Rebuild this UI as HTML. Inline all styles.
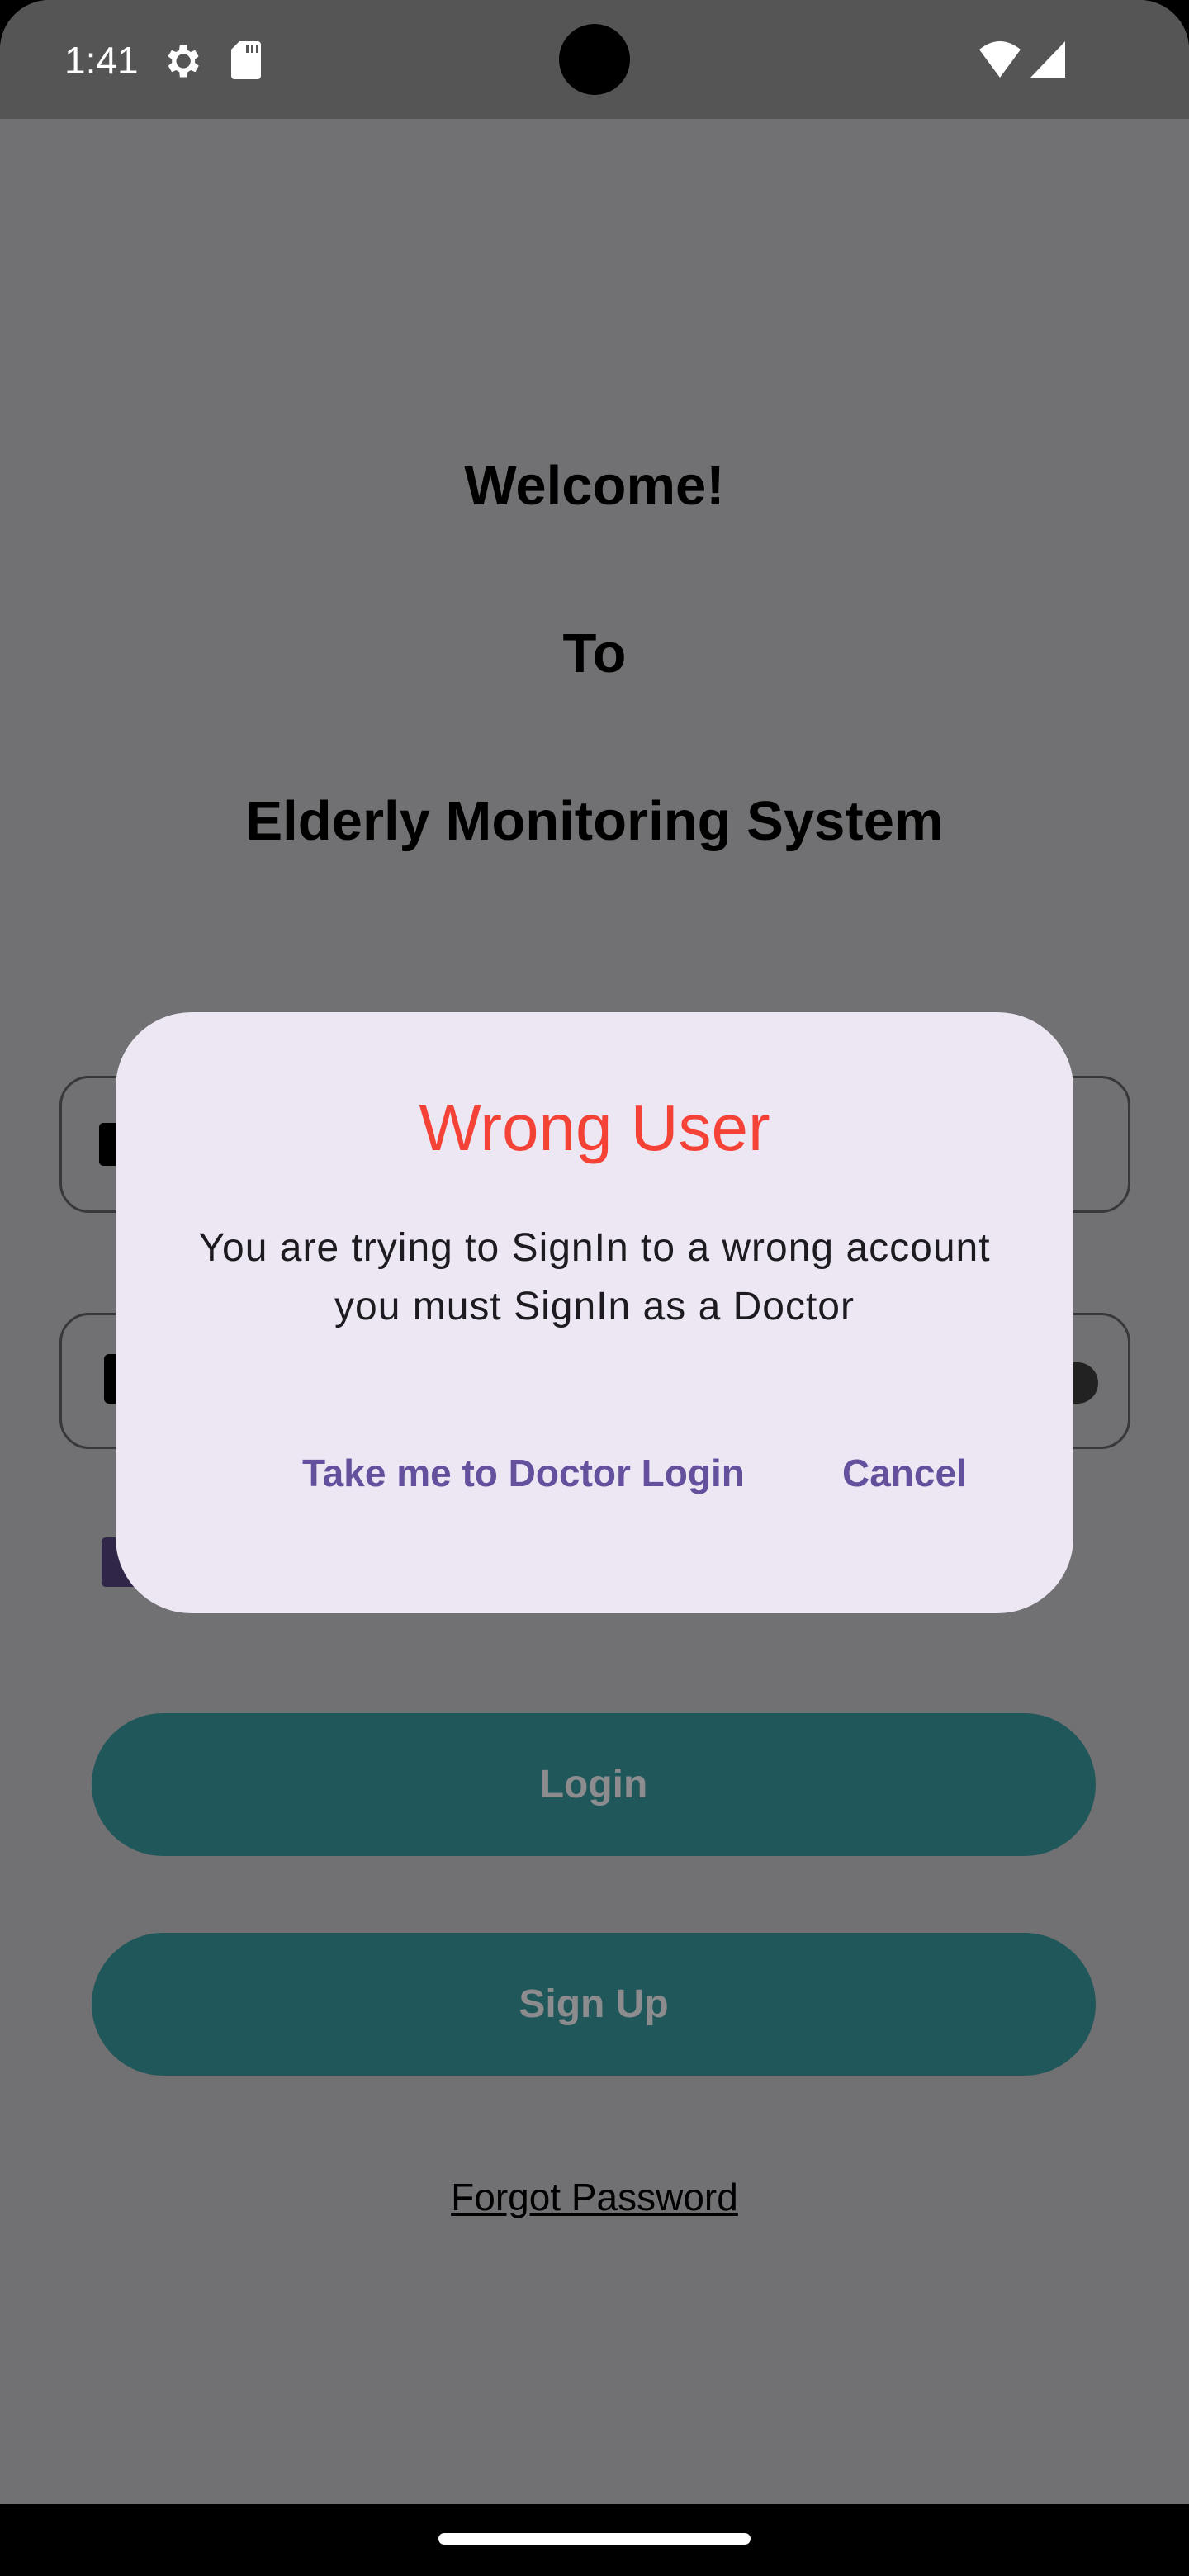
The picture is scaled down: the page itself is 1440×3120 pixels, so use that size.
<!DOCTYPE html>
<html><head><meta charset="utf-8"><style>
*{margin:0;padding:0;box-sizing:border-box}
body{width:1440px;height:3120px;background:#000;position:relative;overflow:hidden;font-family:"Liberation Sans",sans-serif}
.screen{position:absolute;left:0;top:0;width:1440px;height:3033px;background:#717173;border-radius:60px 60px 0 0}
.status{position:absolute;left:0;top:0;width:1440px;height:144px;background:#555556;border-radius:60px 60px 0 0}
.abs{position:absolute}
.t{position:absolute;left:0;width:1440px;text-align:center;font-weight:bold;color:#000;font-size:67px}
.field{position:absolute;left:72px;width:1297px;border:3px solid #38383a;border-radius:36px}
.btn{position:absolute;left:111px;width:1216px;height:173px;border-radius:87px;background:#20575a;color:#8c8c8e;font-weight:bold;font-size:48px;text-align:center;line-height:173px}
</style></head><body>
<div class="screen"></div>
<div class="status"></div>
<div class="abs" style="left:78px;top:46px;color:#fff;font-size:46px">1:41</div>
<svg class="abs" style="left:194px;top:48px" width="52" height="52" viewBox="0 0 24 24"><path fill="#fff" d="M19.4 13a7.5 7.5 0 000-2l2.1-1.6-2-3.5-2.5 1a7 7 0 00-1.7-1L15 3h-4l-.4 2.9a7 7 0 00-1.7 1l-2.5-1-2 3.5L6.6 11a7.5 7.5 0 000 2l-2.1 1.6 2 3.5 2.5-1a7 7 0 001.7 1L11 21h4l.4-2.9a7 7 0 001.7-1l2.5 1 2-3.5zM13 16a4 4 0 110-8 4 4 0 010 8z"/></svg>
<svg class="abs" style="left:280px;top:50px" width="36" height="46" viewBox="0 0 18 23"><path fill="#fff" d="M5 0h11a2 2 0 012 2v19a2 2 0 01-2 2H2a2 2 0 01-2-2V5z"/><path fill="#555556" d="M9 2h1.5v5H9zM12 2h1.5v5H12zM15 2h1.5v5H15z"/></svg>
<div class="abs" style="left:677px;top:29px;width:86px;height:86px;border-radius:50%;background:#000"></div>
<svg class="abs" style="left:1186px;top:50px" width="50" height="44" viewBox="0 0 25 22"><path fill="#fff" d="M0 5Q12.5-5 25 5L12.5 22z"/></svg>
<svg class="abs" style="left:1248px;top:50px" width="42" height="44" viewBox="0 0 21 22"><path fill="#fff" d="M21 0v22H0z"/></svg>

<div class="t" style="top:550px">Welcome!</div>
<div class="t" style="top:753px">To</div>
<div class="t" style="top:956px">Elderly Monitoring System</div>

<div class="field" style="top:1303px;height:166px"></div>
<div class="abs" style="left:120px;top:1360px;width:40px;height:52px;background:#000;border-radius:5px"></div>
<div class="field" style="top:1590px;height:165px"></div>
<div class="abs" style="left:126px;top:1640px;width:40px;height:60px;background:#000;border-radius:6px"></div>
<div class="abs" style="left:1300px;top:1650px;width:30px;height:50px;border-radius:0 30px 30px 0;background:#222"></div>
<div class="abs" style="left:123px;top:1862px;width:44px;height:60px;background:#2f2648;border-radius:5px"></div>

<div class="btn" style="top:2075px">Login</div>
<div class="btn" style="top:2341px">Sign Up</div>
<div class="abs" style="left:0;width:1440px;top:2634px;text-align:center;font-size:46px;color:#000;text-decoration:underline">Forgot Password</div>

<div class="abs" style="left:140px;top:1226px;width:1160px;height:728px;background:#ede7f4;border-radius:92px"></div>
<div class="abs" style="left:140px;width:1160px;top:1320px;text-align:center;font-size:80px;color:#f44336">Wrong User</div>
<div class="abs" style="left:140px;width:1160px;top:1476px;text-align:center;font-size:48px;color:#1d1b20;line-height:71px;letter-spacing:1px">You are trying to SignIn to a wrong account<br>you must SignIn as a Doctor</div>
<div class="abs" style="left:366px;top:1757px;font-size:46px;color:#65509e;font-weight:bold;white-space:nowrap">Take me to Doctor Login</div>
<div class="abs" style="left:1020px;top:1757px;font-size:46px;color:#65509e;font-weight:bold">Cancel</div>

<div class="abs" style="left:531px;top:3068px;width:378px;height:14px;border-radius:7px;background:#fff"></div>
</body></html>
